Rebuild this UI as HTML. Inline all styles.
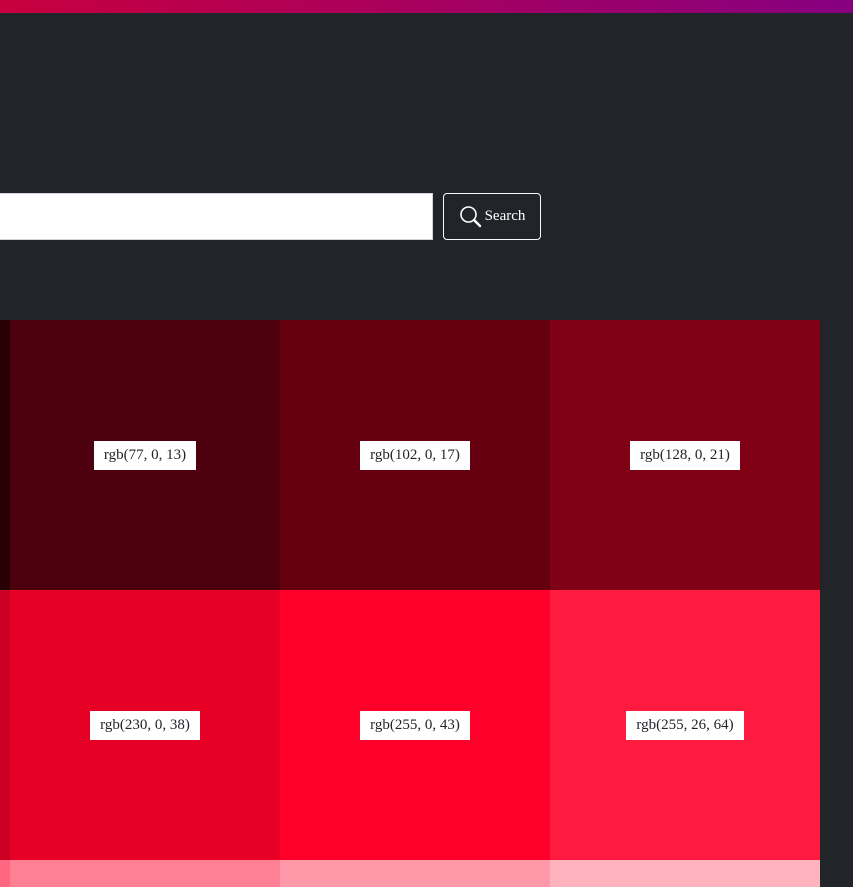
<!DOCTYPE html>
<html style="width:853px;height:887px;overflow:hidden"><head><style>
*{margin:0;padding:0;box-sizing:border-box}
body{width:853px;height:887px;overflow:hidden;background:#212529;position:relative;font-family:"Liberation Serif",serif}
.bar{position:absolute;left:0;top:0;width:853px;height:13px;background:linear-gradient(90deg,#c8003e,#860080)}
.inp{position:absolute;left:0;top:193px;width:433px;height:47px;background:#fff;border:1px solid #ced4da;border-left:none}
.btn{position:absolute;left:443px;top:193px;width:98px;height:47px;border:1px solid #f8f9fa;border-radius:4px;color:#fff;font-size:15px;display:flex;align-items:center;justify-content:center;gap:2px}
.c{position:absolute;width:270px;height:270px;display:flex;align-items:center;justify-content:center}
.l{background:#fff;color:#212529;font-size:15px;padding:6px 10px;line-height:17px}
</style></head><body>
<div class="bar"></div>
<div class="inp"></div>
<div class="btn"><svg width="24" height="24" viewBox="0 0 24 24" fill="none" stroke="#fff" stroke-width="1.6"><circle cx="9.5" cy="9.5" r="7.5"/><path d="M15 15l6 6" stroke-width="2.4" stroke-linecap="round"/></svg>Search</div>

<div class="c" style="left:-260px;top:320px;background:#260005"></div>
<div class="c" style="left:10px;top:320px;background:#4d000d"><span class="l">rgb(77, 0, 13)</span></div>
<div class="c" style="left:280px;top:320px;background:#660011"><span class="l">rgb(102, 0, 17)</span></div>
<div class="c" style="left:550px;top:320px;background:#800015"><span class="l">rgb(128, 0, 21)</span></div>

<div class="c" style="left:-260px;top:590px;background:#cc0022"></div>
<div class="c" style="left:10px;top:590px;background:#e60026"><span class="l">rgb(230, 0, 38)</span></div>
<div class="c" style="left:280px;top:590px;background:#ff002b"><span class="l">rgb(255, 0, 43)</span></div>
<div class="c" style="left:550px;top:590px;background:#ff1a40"><span class="l">rgb(255, 26, 64)</span></div>

<div class="c" style="left:-260px;top:860px;height:27px;background:#ff6680"></div>
<div class="c" style="left:10px;top:860px;height:27px;background:#ff8095"></div>
<div class="c" style="left:280px;top:860px;height:27px;background:#ff99aa"></div>
<div class="c" style="left:550px;top:860px;height:27px;background:#ffb3bf"></div>
</body></html>
